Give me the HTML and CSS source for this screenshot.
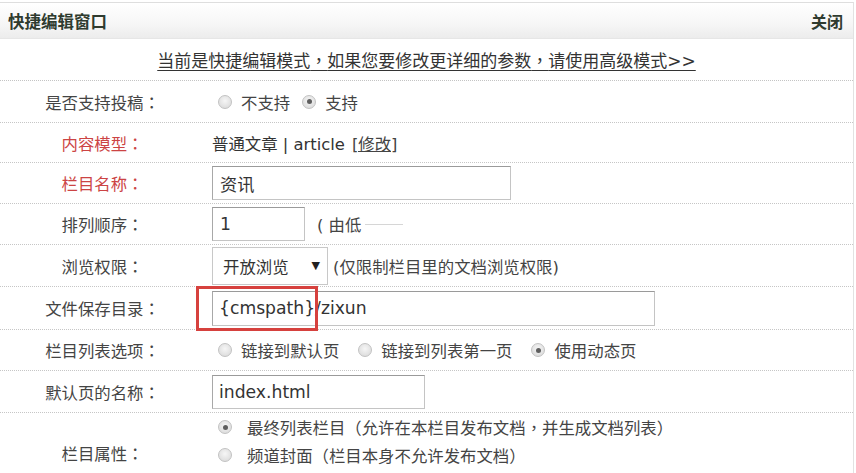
FILE: index.html
```html
<!DOCTYPE html>
<html lang="zh-CN">
<head>
<meta charset="utf-8">
<title>快捷编辑窗口</title>
<link rel="stylesheet" href="styles.css">
</head>
<body>
<div class="win">
  <div class="head">
    <span class="title">快捷编辑窗口</span>
    <span class="close">关闭</span>
  </div>
  <div class="notice"><a href="#">当前是快捷编辑模式<span class="p" lang="zh-TW">，</span>如果您要修改更详细的参数<span class="p" lang="zh-TW">，</span>请使用高级模式&gt;&gt;</a></div>

  <div class="row r1">
    <div class="lab">是否支持投稿<span class="p" lang="zh-TW">：</span></div>
    <div class="val">
      <label class="opt"><span class="radio"></span>不支持</label>
      <label class="opt"><span class="radio on"></span>支持</label>
    </div>
  </div>

  <div class="row r2">
    <div class="lab red">内容模型<span class="p" lang="zh-TW">：</span></div>
    <div class="val">普通文章 | article <a class="mod" href="#">[修改]</a></div>
  </div>

  <div class="row r3">
    <div class="lab red">栏目名称<span class="p" lang="zh-TW">：</span></div>
    <div class="val"><div class="inp w-name">资讯</div></div>
  </div>

  <div class="row r4">
    <div class="lab">排列顺序<span class="p" lang="zh-TW">：</span></div>
    <div class="val"><div class="inp w-order">1</div><span class="hint">( 由低 <span class="smudge"></span></span></div>
  </div>

  <div class="row r5">
    <div class="lab">浏览权限<span class="p" lang="zh-TW">：</span></div>
    <div class="val"><div class="sel"><span>开放浏览</span><span class="arrow">▼</span></div><span class="hint2">(仅限制栏目里的文档浏览权限)</span></div>
  </div>

  <div class="row r6">
    <div class="lab">文件保存目录<span class="p" lang="zh-TW">：</span></div>
    <div class="val rel"><div class="inp w-dir">{cmspath}/zixun</div><span class="mark"></span></div>
  </div>

  <div class="row r7">
    <div class="lab">栏目列表选项<span class="p" lang="zh-TW">：</span></div>
    <div class="val">
      <label class="opt"><span class="radio"></span>链接到默认页</label>
      <label class="opt"><span class="radio"></span>链接到列表第一页</label>
      <label class="opt"><span class="radio on"></span>使用动态页</label>
    </div>
  </div>

  <div class="row r8">
    <div class="lab">默认页的名称<span class="p" lang="zh-TW">：</span></div>
    <div class="val"><div class="inp w-def">index.html</div></div>
  </div>

  <div class="row r9">
    <div class="lab">栏目属性<span class="p" lang="zh-TW">：</span></div>
    <div class="val col">
      <label class="opt"><span class="radio on"></span>最终列表栏目<span class="p" lang="zh-TW">（</span>允许在本栏目发布文档<span class="p" lang="zh-TW">，</span>并生成文档列表<span class="p" lang="zh-TW">）</span></label>
      <label class="opt"><span class="radio"></span>频道封面<span class="p" lang="zh-TW">（</span>栏目本身不允许发布文档<span class="p" lang="zh-TW">）</span></label>
      <span class="opt"><span class="radio"></span></span>
    </div>
  </div>
</div>
</body>
</html>
```

FILE: styles.css
```css
html, body {
  margin: 0;
  padding: 0;
  background: #fff;
}
body {
  font-family: "DejaVu Sans", "Noto Sans CJK SC", sans-serif;
  font-size: 16.4px;
  color: #3a3a3a;
  overflow: hidden;
  height: 473px;
}
.p { font-family: "Noto Sans CJK TC", sans-serif; }
.win {
  margin-top: 2px;
  width: 853px;
  border-top: 1px solid #dedede;
  border-right: 1px solid #e2e2e2;
}
.head {
  height: 35px;
  display: flex;
  align-items: center;
  justify-content: space-between;
  padding: 0 10px 0 8px;
  background: linear-gradient(#ffffff, #f6f6f6 60%, #ececec);
  border-bottom: 1px solid #e6e6e6;
  font-family: "Noto Sans CJK SC", sans-serif;
  font-weight: bold;
  font-size: 16.5px;
  color: #2f3b2f;
}
.close { font-size: 16px; }
.notice {
  height: 41px;
  display: flex;
  align-items: center;
  justify-content: center;
  border-bottom: 1px dotted #c4c4c4;
  font-size: 17px;
}
.notice a {
  color: #333;
  text-decoration: underline;
  text-underline-offset: 3px;
}
.row {
  display: grid;
  grid-template-columns: 205px 1fr;
  align-items: center;
  border-bottom: 1px dotted #c6c6c6;
  height: 40px;
}
.r1 { height: 41px; }
.r2 { height: 39px; }
.r5 { height: 41px; }
.r6 { height: 42px; }
.r8 { height: 41px; }
.r9 { height: 90px; align-items: start; }
.lab {
  text-align: center;
  color: #444;
  font-family: "Noto Sans CJK SC", sans-serif;
}
.r9 .lab { padding-top: 28px; }
.lab.red { color: #cc4444; }
.val {
  display: flex;
  align-items: center;
  padding-left: 7px;
  color: #333;
  white-space: nowrap;
}
.val.col {
  flex-direction: column;
  align-items: flex-start;
  gap: 4px;
  padding-top: 2px;
}
.rel { position: relative; }
.opt {
  display: inline-flex;
  align-items: center;
  margin-left: 6px;
  margin-right: 6px;
  color: #444;
}
.radio {
  width: 14px;
  height: 14px;
  border-radius: 50%;
  border: 1px solid #c2c2c2;
  background: radial-gradient(circle at 50% 40%, #f6f6f6, #d6d6d6);
  box-sizing: border-box;
  margin-right: 9px;
  position: relative;
  flex: none;
}
.radio.on::after {
  content: "";
  position: absolute;
  left: 3.5px;
  top: 3.5px;
  width: 5px;
  height: 5px;
  border-radius: 50%;
  background: #5e5e5e;
}
.r7 .opt { margin-right: 9px; }
.r7 .opt + .opt { margin-left: 10px; }
.r9 .opt { height: 24px; }
.r9 .radio { margin-right: 15px; }
.mod {
  color: #444;
  text-decoration: underline;
  margin-left: 7px;
}
.inp {
  box-sizing: border-box;
  height: 34px;
  border: 1px solid #c4c4c4;
  border-top-color: #9a9a9a;
  border-left-color: #a8a8a8;
  padding: 0 7px;
  display: flex;
  align-items: center;
  color: #333;
  font-size: 17.2px;
  background: #fff;
}
.w-name { width: 299px; }
.w-order { width: 93px; }
.w-dir { width: 443px; height: 35px; padding-left: 6px; }
.w-def { width: 213px; padding-left: 6px; }
.hint {
  margin-left: 12px;
  color: #444;
  display: inline-flex;
  align-items: center;
}
.smudge {
  display: inline-block;
  width: 38px;
  height: 1px;
  background: #d6d6d6;
  margin-left: 4px;
}
.sel {
  box-sizing: border-box;
  width: 116px;
  height: 38px;
  border: 1px solid #c8c8c8;
  display: flex;
  align-items: center;
  justify-content: space-between;
  padding: 0 7px 0 10px;
  color: #333;
  background: #fff;
}
.arrow {
  font-size: 11px;
  color: #222;
}
.hint2 {
  margin-left: 5px;
  color: #444;
}
.mark {
  position: absolute;
  left: -9px;
  top: -5px;
  width: 116px;
  height: 39px;
  border: 3px solid #d6413e;
}
```
